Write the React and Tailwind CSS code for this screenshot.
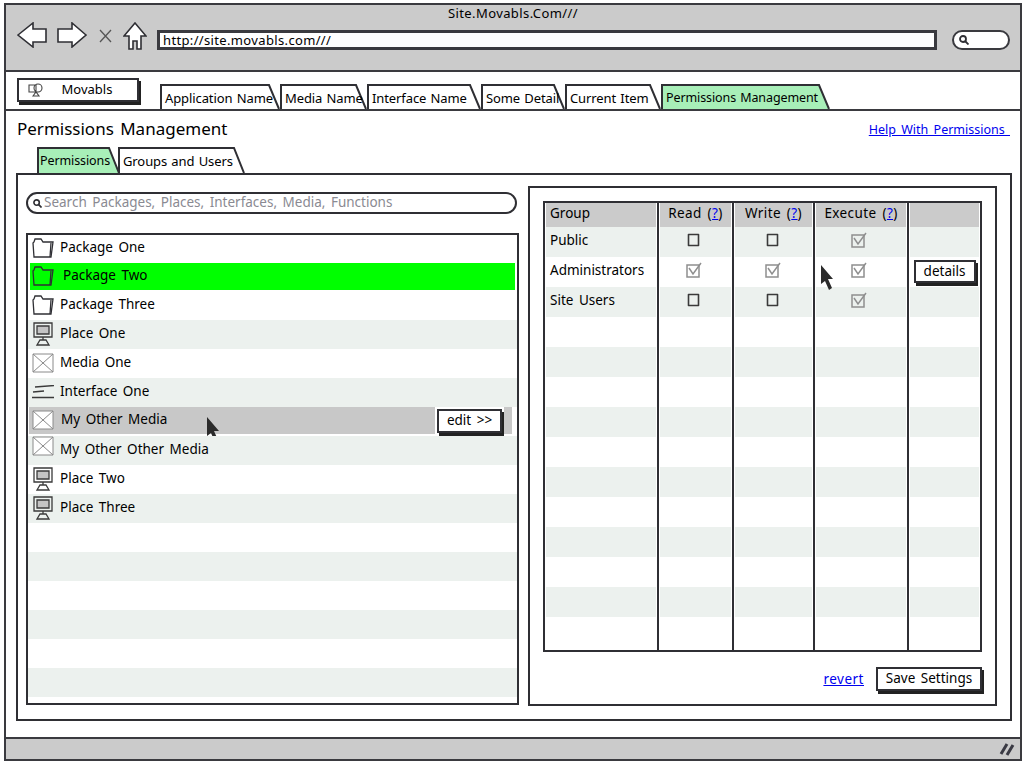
import React from 'react';

const ink = '#2f2f34';

const rows = [
  { icon: 'folder', label: 'Package One' },
  { icon: 'folder', label: 'Package Two', selected: true },
  { icon: 'folder', label: 'Package Three' },
  { icon: 'place', label: 'Place One' },
  { icon: 'media', label: 'Media One' },
  { icon: 'lines', label: 'Interface One' },
  { icon: 'media', label: 'My Other Media', hover: true },
  { icon: 'media', label: 'My Other Other Media', raised: true },
  { icon: 'place', label: 'Place Two' },
  { icon: 'place', label: 'Place Three' },
  {}, {}, {}, {}, {}, {},
];

const groups = [
  { name: 'Public', read: false, write: false, exec: true },
  { name: 'Administrators', read: true, write: true, exec: true, details: true },
  { name: 'Site Users', read: false, write: false, exec: true },
  {}, {}, {}, {}, {}, {}, {}, {}, {}, {}, {},
];

const navTabs = [
  { label: 'Application Name', w: 120 },
  { label: 'Media Name', w: 87 },
  { label: 'Interface Name', w: 114 },
  { label: 'Some Detail', w: 84 },
  { label: 'Current Item', w: 96 },
  { label: 'Permissions Management', w: 169, active: true },
];

const Tab = ({ label, w, h, active, inset = 'pl-[5px]' }) => (
  <div className={`relative shrink-0 ${h === 26 ? 'h-[26px]' : 'h-[25px]'}`} style={{ width: w }}>
    <svg className="absolute inset-0" width={w} height={h} fill={active ? '#a8efb8' : '#fff'}>
      <path d={`M1 ${h} L1 1 L${w - 11} 1 L${w - 1} ${h}`} stroke={ink} strokeWidth="2" />
    </svg>
    <span className={`relative block whitespace-nowrap pt-[5px] leading-[18px] tracking-[-0.1px] [word-spacing:1px] ${active ? 'text-[12.5px]' : 'text-[13px]'} ${inset}`}>{label}</span>
  </div>
);

const Folder = () => (
  <svg width="22" height="20" viewBox="0 0 22 20" fill="none" stroke={ink} strokeWidth="1.3">
    <path d="M1 5 L2 19 L19 19 L21 4 L11 4 L9 1 L3 1 L2 4 Z" />
    <path d="M19 5 L18 19" />
  </svg>
);

const Place = () => (
  <svg width="22" height="24" viewBox="0 0 22 24" fill="none" stroke="#3a3a3a" strokeWidth="1.3">
    <path d="M2 1 L20 1 L20 15 L2 15 Z" />
    <path d="M5 4 L17 4 L17 12 L5 12 Z" fill="#c4c4c4" />
    <path d="M11 15 L11 18 M8 18 L14 18 L17 23 L5 23 Z" />
  </svg>
);

const Media = () => (
  <svg width="22" height="20" viewBox="0 0 22 20" fill="#fff" stroke="#8a8a8a" strokeWidth="1">
    <path d="M1 1 L21 1 L21 19 L1 19 Z M1 1 L21 19 M21 1 L1 19" />
  </svg>
);

const Lines = () => (
  <svg width="22" height="14" viewBox="0 0 22 14" fill="none" stroke="#3a3a3a" strokeWidth="1.4">
    <path d="M3 2 L22 0.5 M1 7 L12 6 M0 12.5 L22 12.5" />
  </svg>
);

const icons = { folder: Folder, place: Place, media: Media, lines: Lines };

const Cursor = ({ className }) => (
  <svg className={`absolute ${className}`} width="14" height="25" viewBox="0 0 14 25" fill="#2b2b2b">
    <path d="M1 0 L13 14 L8 14 L12 23 L9 25 L5 16 L1 19 Z" />
  </svg>
);

const SearchGlass = ({ size = 10 }) => (
  <svg width={size} height={size} viewBox="0 0 10 10" fill="none" stroke={ink} strokeWidth="1.8">
    <circle cx="4" cy="4" r="3" />
    <path d="M6 6 L9.5 9.5" />
  </svg>
);

const Box = ({ checked, className = '' }) =>
  checked ? (
    <svg className={className} width="16" height="16" viewBox="0 0 16 16" fill="none" stroke="#8f8f8f" strokeWidth="1.5">
      <path d="M1 3 L13 3 L13 15 L1 15 Z" />
      <path d="M3 6 L7 12 L15 1" />
    </svg>
  ) : (
    <svg className={className} width="13" height="14" viewBox="0 0 13 14" fill="none" stroke="#3a3a3a" strokeWidth="1.6" strokeLinejoin="round">
      <path d="M1.5 1.5 L11.5 1.5 L11.5 12.5 L1.5 12.5 Z" />
    </svg>
  );

const Btn = ({ children, className = '' }) => (
  <div className={`flex items-center justify-center border-2 border-[#2f2f34] bg-white shadow-[2px_3px_0_#222] ${className}`}>
    {children}
  </div>
);

const Q = () => <a className="text-[#0000ee] underline">?</a>;

const Cell = ({ className = '', zebra, children }) => (
  <div className={`flex items-center bg-clip-content px-px ${zebra ? 'bg-[#ecf1ee]' : ''} ${className}`}>{children}</div>
);

export default function App() {
  return (
    <div className="flex h-[764px] w-[1024px] flex-col overflow-hidden bg-white pb-[3px] pl-1 pr-[2px] pt-[3px] font-['Noto_Sans',sans-serif] text-[13.5px] text-black [word-spacing:2px]">
      {/* browser chrome */}
      <header className="h-[69px] shrink-0 border-2 border-[#3a3a3f] bg-[#cbcbcb]">
        <div className="text-center text-[13px] leading-[16px] tracking-[0.4px]">Site.Movabls.Com///</div>
        <div className="flex items-start pl-[11px] pt-[1px]">
          <svg width="30" height="26" viewBox="0 0 30 26" fill="#fff" stroke={ink} strokeWidth="1.6">
            <path d="M1 13 L16 1 L16 7 L29 7 L29 20 L16 20 L16 25 Z" />
          </svg>
          <svg className="ml-[10px]" width="30" height="26" viewBox="0 0 30 26" fill="#fff" stroke={ink} strokeWidth="1.6">
            <path d="M29 13 L15 1 L15 7 L1 7 L1 20 L15 20 L15 25 Z" />
          </svg>
          <svg className="ml-[12px] mt-[7px]" width="13" height="14" viewBox="0 0 13 14" fill="none" stroke="#555" strokeWidth="1.3">
            <path d="M1 1 L12 13 M12 1 L1 13" />
          </svg>
          <svg className="ml-[11px]" width="24" height="28" viewBox="0 0 24 28" fill="#fff" stroke={ink} strokeWidth="1.6">
            <path d="M12 1 L23 14 L18 14 L18 27 L14 27 L14 19 L10 19 L10 27 L6 27 L6 14 L1 14 Z" />
          </svg>
          <div className="ml-[10px] mt-[8px] h-[20px] w-[780px] border-[3px] border-[#3a3a3f] bg-white pl-[3px] text-[13px] leading-[14px] tracking-[0.35px]">http://site.movabls.com///</div>
          <div className="ml-[15px] mt-[8px] flex h-[20px] w-[58px] items-center rounded-full border-2 border-[#3a3a3f] bg-white pl-[5px]">
            <SearchGlass />
          </div>
        </div>
      </header>

      {/* top nav */}
      <nav className="flex h-[39px] shrink-0 items-end border-x-2 border-b-2 border-[#3a3a3f] pl-[11px]">
        <Btn className="mb-[7px] h-[24px] w-[122px] gap-[18px] pr-[16px] text-[13px]">
          <svg width="16" height="14" viewBox="0 0 16 14" fill="none" stroke="#444" strokeWidth="1.1">
            <path d="M1 2 L8 2 L8 9 L1 9 Z M6 5 A4 4 0 1 1 14 5 A4 4 0 1 1 6 5 M5 13 L8 9 L11 13 Z" />
          </svg>
          <span>Movabls</span>
        </Btn>
        <div className="ml-[21px] flex">
          {navTabs.map((t) => (
            <Tab key={t.label} {...t} h={25} />
          ))}
        </div>
      </nav>

      {/* page */}
      <main className="flex min-h-0 flex-1 flex-col border-x-2 border-[#3a3a3f] pl-[10px] pr-[8px]">
        <div className="flex h-[36px] shrink-0 items-center justify-between pb-[1px] pl-[1px]">
          <h1 className="text-[17px] font-normal">Permissions Management</h1>
          <a className="mr-[2px] mt-[4px] text-[12.5px] text-[#0000ee] underline">Help With Permissions&nbsp;</a>
        </div>

        <div className="flex shrink-0 pl-[21px]">
          <Tab label="Permissions" w={83} h={26} active inset="pl-[3px]" />
          <div className="-ml-[2px]">
            <Tab label="Groups and Users" w={127} h={26} />
          </div>
        </div>

        <section className="flex h-[548px] shrink-0 items-start gap-[9px] border-2 border-[#2f2f34] pl-[8px] pt-[11px]">
          {/* left column */}
          <div className="w-[493px] shrink-0 pt-[6px]">
            <div className="flex h-[22px] w-[491px] items-center rounded-full border-2 border-[#2f2f34] pl-[5px]">
              <SearchGlass size={9} />
              <span className="ml-[2px] -translate-y-px text-[#8a8a92]">Search Packages, Places, Interfaces, Media, Functions</span>
            </div>
            <div className="mt-[19px] h-[472px] border-2 border-[#2f2f34]">
              {rows.map((r, i) => {
                const Icon = icons[r.icon];
                const zebra = i % 2 === 1 && !r.selected;
                return (
                  <div
                    key={i}
                    className={`relative flex ${i === 0 ? 'h-[27px]' : 'h-[29px]'} ${zebra ? 'bg-[#ecf1ee]' : ''}`}
                  >
                    {r.label && (
                      <div
                        className={`flex flex-1 items-center pl-[4px] ${
                          r.selected ? 'mx-[2px] my-px !pl-[2px] bg-[#00ff00]' : ''
                        } ${r.hover ? 'mb-[2px] ml-px mr-[5px] !pl-[3px] bg-[#c8c8c8]' : ''}`}
                      >
                        <div className={`flex w-[22px] shrink-0 -translate-y-px justify-center ${r.raised ? '-mt-[8px]' : ''}`}>
                          <Icon />
                        </div>
                        <span className={`ml-[6px] -translate-y-px ${r.selected ? 'ml-[9px]' : ''} ${r.hover ? 'ml-[7px]' : ''}`}>{r.label}</span>
                        {r.hover && (
                          <div className="ml-auto mr-[8px] flex h-full items-center bg-white px-[2px]">
                            <Btn className="h-[24px] w-[65px]">edit &gt;&gt;</Btn>
                          </div>
                        )}
                      </div>
                    )}
                    {r.hover && <Cursor className="left-[178px] top-[10px]" />}
                  </div>
                );
              })}
            </div>
          </div>

          {/* right column */}
          <div className="h-[520px] w-[469px] shrink-0 border-2 border-[#2f2f34] pl-[13px] pt-[13px]">
            <div className="relative flex h-[451px] w-[439px] flex-col border-2 border-[#2f2f34]">
              <div className="flex h-[24px] shrink-0">
                <Cell className="w-[112px] bg-[#cbcbcb]"><span className="-translate-y-[2px] pl-[4px]">Group</span></Cell>
                <Cell className="w-[75px] justify-center border-l-2 border-[#2f2f34] bg-[#cbcbcb]"><span className="-translate-y-[2px] tracking-[0.4px]">Read (<Q />)</span></Cell>
                <Cell className="w-[81px] justify-center border-l-2 border-[#2f2f34] bg-[#cbcbcb]"><span className="-translate-y-[2px] tracking-[0.4px]">Write (<Q />)</span></Cell>
                <Cell className="w-[94px] justify-center border-l-2 border-[#2f2f34] bg-[#cbcbcb]"><span className="-translate-y-[2px] tracking-[0.4px]">Execute (<Q />)</span></Cell>
                <Cell className="w-[73px] border-l-2 border-[#2f2f34] bg-[#cbcbcb]" />
              </div>
              {groups.map((g, i) => {
                const zebra = i % 2 === 0 && i < 13;
                return (
                  <div key={i} className={`flex ${i === 13 ? 'min-h-0 flex-1' : 'h-[30px]'}`}>
                    <Cell zebra={zebra} className="w-[112px]"><span className="-translate-y-[2px] pl-[4px]">{g.name}</span></Cell>
                    <Cell zebra={zebra} className="w-[75px] justify-center border-l-2 border-[#2f2f34]">{g.name && <Box checked={g.read} className="-translate-x-[2px] -translate-y-[2px]" />}</Cell>
                    <Cell zebra={zebra} className="w-[81px] justify-center border-l-2 border-[#2f2f34]">{g.name && <Box checked={g.write} className="-translate-x-px -translate-y-[2px]" />}</Cell>
                    <Cell zebra={zebra} className="w-[94px] justify-center border-l-2 border-[#2f2f34]">{g.name && <Box checked={g.exec} className="-translate-x-[2px] -translate-y-[2px]" />}</Cell>
                    <Cell zebra={zebra} className="w-[73px] justify-center border-l-2 border-[#2f2f34]">
                      {g.details && <Btn className="h-[23px] w-[62px] -translate-y-px">details</Btn>}
                    </Cell>
                  </div>
                );
              })}
              <Cursor className="left-[275px] top-[62px]" />
            </div>
            <div className="mt-[15px] flex w-[441px] items-center justify-end gap-[12px] pr-[2px]">
              <a className="mt-[1px] tracking-[0.5px] text-[#0000ee] underline">revert</a>
              <Btn className="h-[24px] w-[106px]"><span className="-translate-y-px">Save Settings</span></Btn>
            </div>
          </div>
        </section>
        <div className="flex-1" />
      </main>

      {/* status bar */}
      <footer className="flex h-[24px] shrink-0 items-center justify-end border-2 border-[#3a3a3f] bg-[#cbcbcb] pr-[5px]">
        <svg width="16" height="14" viewBox="0 0 16 14" fill="none" stroke="#3a3a44" strokeWidth="3">
          <path d="M2 12 L8 2 M8 13 L14 3" />
        </svg>
      </footer>
    </div>
  );
}
